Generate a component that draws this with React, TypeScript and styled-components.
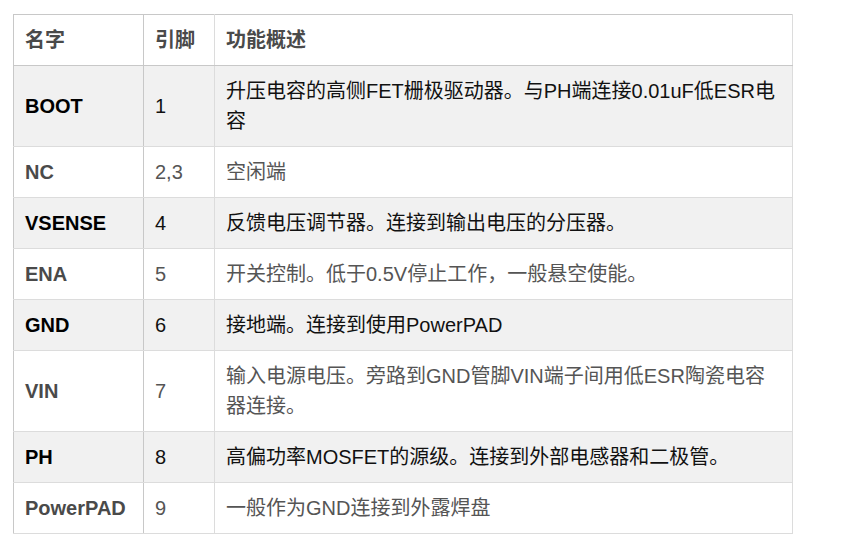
import React from "react";
import styled, { createGlobalStyle } from "styled-components";

const GlobalStyle = createGlobalStyle`
  html, body { margin: 0; padding: 0; background: #fff; }
  body { font-family: "Liberation Sans", Arial, "Noto Sans CJK SC", sans-serif; }
`;

const Page = styled.div`
  padding: 14px 0 0 13px;
`;

const Table = styled.table`
  border-collapse: collapse;
  width: 780px;
  font-size: 20px;
  line-height: 30px;
  table-layout: fixed;
  border: 1px solid #c8c8c8;
`;

const HeadCell = styled.th<{ $w?: number; $first?: boolean }>`
  box-sizing: border-box;
  width: ${(p) => (p.$w ? `${p.$w}px` : "auto")};
  text-align: left;
  font-weight: bold;
  color: #4a4a4a;
  padding: 10px 10px 10px 11px;
  border: 1px solid #dcdcdc;
  border-bottom: 1px solid #c8c8c8;
  border-top: 1px solid #c8c8c8;
  ${(p) => (p.$first ? "border-right: 1px solid #c8c8c8; border-left: 1px solid #c8c8c8;" : "")}
  background: #fff;
`;

const Row = styled.tr<{ $shade: boolean }>`
  background: ${(p) => (p.$shade ? "#f1f1f1" : "#fff")};
  color: ${(p) => (p.$shade ? "#111" : "#555")};
`;

const Cell = styled.td<{ $first?: boolean }>`
  box-sizing: border-box;
  padding: 10px 10px 10px 11px;
  vertical-align: top;
  border: 1px solid #dcdcdc;
  font-weight: ${(p) => (p.$first ? "bold" : "normal")};
  ${(p) => (p.$first ? "border-right: 1px solid #c8c8c8; border-left: 1px solid #c8c8c8;" : "")}
`;

const MidCell = styled(Cell)`
  vertical-align: middle;
`;

const NameText = styled.span<{ $shade: boolean }>`
  color: ${(p) => (p.$shade ? "#000" : "#4a4a4a")};
`;

const rows = [
  { name: "BOOT", pin: "1", desc: "升压电容的高侧FET栅极驱动器。与PH端连接0.01uF低ESR电容" },
  { name: "NC", pin: "2,3", desc: "空闲端" },
  { name: "VSENSE", pin: "4", desc: "反馈电压调节器。连接到输出电压的分压器。" },
  { name: "ENA", pin: "5", desc: "开关控制。低于0.5V停止工作，一般悬空使能。" },
  { name: "GND", pin: "6", desc: "接地端。连接到使用PowerPAD" },
  { name: "VIN", pin: "7", desc: "输入电源电压。旁路到GND管脚VIN端子间用低ESR陶瓷电容器连接。" },
  { name: "PH", pin: "8", desc: "高偏功率MOSFET的源级。连接到外部电感器和二极管。" },
  { name: "PowerPAD", pin: "9", desc: "一般作为GND连接到外露焊盘" },
];

export default function App() {
  return (
    <>
      <GlobalStyle />
      <Page>
        <Table>
          <thead>
            <tr>
              <HeadCell $w={130} $first>名字</HeadCell>
              <HeadCell $w={71}>引脚</HeadCell>
              <HeadCell>功能概述</HeadCell>
            </tr>
          </thead>
          <tbody>
            {rows.map((r, i) => {
              const shade = i % 2 === 0;
              return (
                <Row key={r.name} $shade={shade}>
                  <MidCell $first>
                    <NameText $shade={shade}>{r.name}</NameText>
                  </MidCell>
                  <MidCell>{r.pin}</MidCell>
                  <Cell>{r.desc}</Cell>
                </Row>
              );
            })}
          </tbody>
        </Table>
      </Page>
    </>
  );
}
